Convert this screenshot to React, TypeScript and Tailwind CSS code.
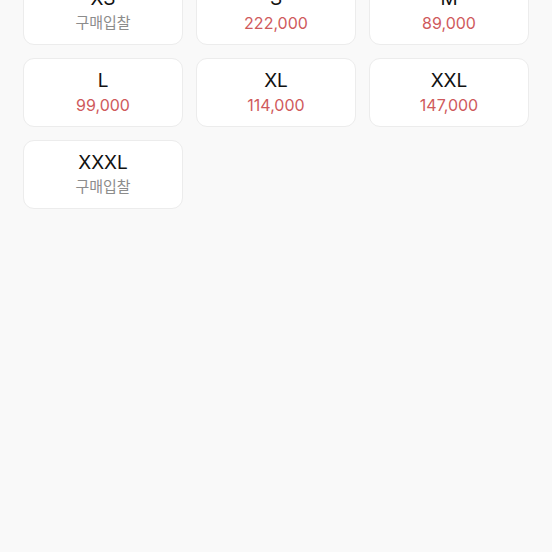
const sizes = [
  { name: "XS", price: null },
  { name: "S", price: "222,000" },
  { name: "M", price: "89,000" },
  { name: "L", price: "99,000" },
  { name: "XL", price: "114,000" },
  { name: "XXL", price: "147,000" },
  { name: "XXXL", price: null },
];

export default function App() {
  return (
    <div
      className="min-h-[552px] overflow-hidden bg-[#f9f9f9]"
      style={{ fontFamily: 'Inter, "Noto Sans CJK KR", sans-serif' }}
    >
      <div className="mt-[-24px] grid grid-cols-3 gap-[13px] px-[23px]">
        {sizes.map((s) => (
          <div
            key={s.name}
            className="flex h-[69px] flex-col items-center justify-center rounded-[11px] border border-[#ececec] bg-white"
          >
            <span className="text-[19px] leading-[25px] text-[#111]">{s.name}</span>
            {s.price ? (
              <span className="text-[16px] leading-[24px] text-[#cf5a5c]">{s.price}</span>
            ) : (
              <span className="text-[15px] leading-[24px] text-[#8c8c8c]">구매입찰</span>
            )}
          </div>
        ))}
      </div>
    </div>
  );
}
